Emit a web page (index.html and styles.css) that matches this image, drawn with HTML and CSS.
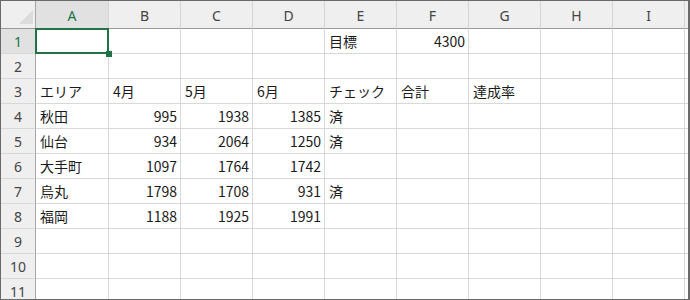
FILE: index.html
```html
<!DOCTYPE html>
<html lang="ja">
  <head>
    <meta charset="UTF-8" />
    <title>Sheet1</title>
    <link rel="stylesheet" href="styles.css">
  </head>
  <body>
    <div class="frame">
      <div class="sheet">
        <div class="corner">
          <svg width="16" height="16" viewBox="0 0 16 16"><polygon points="15,1 15,15 1,15" fill="#dcdcdc" /></svg>
        </div>
        <div class="col-head active">A</div>
        <div class="col-head">B</div>
        <div class="col-head">C</div>
        <div class="col-head">D</div>
        <div class="col-head">E</div>
        <div class="col-head">F</div>
        <div class="col-head">G</div>
        <div class="col-head">H</div>
        <div class="col-head">I</div>
        <div class="col-head filler"></div>

        <div class="row-head active">1</div>
        <div class="cell selected"><span class="selection"><span class="handle"></span></span></div>
        <div class="cell"></div>
        <div class="cell"></div>
        <div class="cell"></div>
        <div class="cell">目標</div>
        <div class="cell num">4300</div>
        <div class="cell"></div>
        <div class="cell"></div>
        <div class="cell"></div>
        <div class="cell filler"></div>

        <div class="row-head">2</div>
        <div class="cell"></div>
        <div class="cell"></div>
        <div class="cell"></div>
        <div class="cell"></div>
        <div class="cell"></div>
        <div class="cell"></div>
        <div class="cell"></div>
        <div class="cell"></div>
        <div class="cell"></div>
        <div class="cell filler"></div>

        <div class="row-head">3</div>
        <div class="cell">エリア</div>
        <div class="cell">4月</div>
        <div class="cell">5月</div>
        <div class="cell">6月</div>
        <div class="cell">チェック</div>
        <div class="cell">合計</div>
        <div class="cell">達成率</div>
        <div class="cell"></div>
        <div class="cell"></div>
        <div class="cell filler"></div>

        <div class="row-head">4</div>
        <div class="cell">秋田</div>
        <div class="cell num">995</div>
        <div class="cell num">1938</div>
        <div class="cell num">1385</div>
        <div class="cell">済</div>
        <div class="cell"></div>
        <div class="cell"></div>
        <div class="cell"></div>
        <div class="cell"></div>
        <div class="cell filler"></div>

        <div class="row-head">5</div>
        <div class="cell">仙台</div>
        <div class="cell num">934</div>
        <div class="cell num">2064</div>
        <div class="cell num">1250</div>
        <div class="cell">済</div>
        <div class="cell"></div>
        <div class="cell"></div>
        <div class="cell"></div>
        <div class="cell"></div>
        <div class="cell filler"></div>

        <div class="row-head">6</div>
        <div class="cell">大手町</div>
        <div class="cell num">1097</div>
        <div class="cell num">1764</div>
        <div class="cell num">1742</div>
        <div class="cell"></div>
        <div class="cell"></div>
        <div class="cell"></div>
        <div class="cell"></div>
        <div class="cell"></div>
        <div class="cell filler"></div>

        <div class="row-head">7</div>
        <div class="cell">烏丸</div>
        <div class="cell num">1798</div>
        <div class="cell num">1708</div>
        <div class="cell num">931</div>
        <div class="cell">済</div>
        <div class="cell"></div>
        <div class="cell"></div>
        <div class="cell"></div>
        <div class="cell"></div>
        <div class="cell filler"></div>

        <div class="row-head">8</div>
        <div class="cell">福岡</div>
        <div class="cell num">1188</div>
        <div class="cell num">1925</div>
        <div class="cell num">1991</div>
        <div class="cell"></div>
        <div class="cell"></div>
        <div class="cell"></div>
        <div class="cell"></div>
        <div class="cell"></div>
        <div class="cell filler"></div>

        <div class="row-head">9</div>
        <div class="cell"></div>
        <div class="cell"></div>
        <div class="cell"></div>
        <div class="cell"></div>
        <div class="cell"></div>
        <div class="cell"></div>
        <div class="cell"></div>
        <div class="cell"></div>
        <div class="cell"></div>
        <div class="cell filler"></div>

        <div class="row-head">10</div>
        <div class="cell"></div>
        <div class="cell"></div>
        <div class="cell"></div>
        <div class="cell"></div>
        <div class="cell"></div>
        <div class="cell"></div>
        <div class="cell"></div>
        <div class="cell"></div>
        <div class="cell"></div>
        <div class="cell filler"></div>

        <div class="row-head">11</div>
        <div class="cell"></div>
        <div class="cell"></div>
        <div class="cell"></div>
        <div class="cell"></div>
        <div class="cell"></div>
        <div class="cell"></div>
        <div class="cell"></div>
        <div class="cell"></div>
        <div class="cell"></div>
        <div class="cell filler"></div>
      </div>
    </div>
  </body>
</html>
```

FILE: styles.css
```css
html {
  box-sizing: border-box;
}
*,
*:before,
*:after {
  box-sizing: inherit;
}

body {
  margin: 0;
  padding: 0;
  background: #ffffff;
}

.frame {
  width: 690px;
  height: 300px;
  border: 1px solid #6a6a6a;
  border-right-width: 2px;
  overflow: hidden;
}

.sheet {
  display: grid;
  grid-template-columns: 35px 73px repeat(8, 72px) 3px;
  grid-template-rows: 28px repeat(11, 25px);
  font-family: "Noto Sans CJK JP", "Noto Sans", sans-serif;
  font-size: 14px;
  color: #1a1a1a;
}

.corner {
  background: #efefef;
  border-right: 1px solid #a6a6a6;
  border-bottom: 1px solid #9a9a9a;
  display: flex;
  align-items: flex-end;
  justify-content: flex-end;
  padding: 0 1px 3px 0;
}

.corner svg {
  display: block;
}

.col-head {
  background: #efefef;
  border-right: 1px solid #d4d4d4;
  border-bottom: 1px solid #9a9a9a;
  font-family: "Noto Sans", sans-serif;
  font-size: 14px;
  color: #444444;
  display: flex;
  align-items: center;
  justify-content: center;
  padding-top: 1px;
}

.col-head.filler {
  border-right: none;
}

.row-head {
  background: #efefef;
  border-right: 1px solid #a6a6a6;
  border-bottom: 1px solid #d8d8d8;
  font-family: "Noto Sans", sans-serif;
  font-size: 14px;
  color: #444444;
  display: flex;
  align-items: center;
  justify-content: center;
}

.col-head.active,
.row-head.active {
  background: #e1e1e1;
  color: #217346;
}

.cell {
  border-right: 1px solid #d9d9d9;
  border-bottom: 1px solid #d9d9d9;
  padding: 0 3px 0 4px;
  line-height: 24px;
  white-space: nowrap;
  position: relative;
}

.cell.num {
  text-align: right;
}

.cell.filler {
  border-right: none;
  padding: 0;
}

.selection {
  position: absolute;
  top: -1px;
  left: -1px;
  right: -1px;
  bottom: -1px;
  border: 2px solid #217346;
  z-index: 1;
}

.handle {
  position: absolute;
  right: -5px;
  bottom: -5px;
  width: 6px;
  height: 6px;
  background: #217346;
}
```
